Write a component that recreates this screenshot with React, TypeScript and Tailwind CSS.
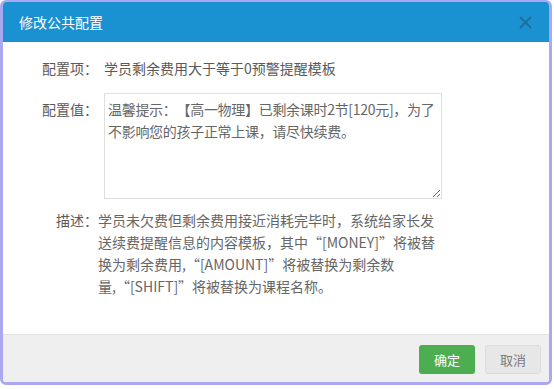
import React from 'react';

const FONT = "font-['Microsoft_YaHei','Noto_Sans_CJK_SC',sans-serif]";

const TEMPLATE_TEXT =
  '温馨提示：【高一物理】已剩余课时2节[120元]，为了不影响您的孩子正常上课，请尽快续费。';

// description lines are broken where the reference breaks them
const DESC_LINES = [
  '学员未欠费但剩余费用接近消耗完毕时，系统给家长发',
  '送续费提醒信息的内容模板，其中“[MONEY]”将被替',
  '换为剩余费用,“[AMOUNT]”将被替换为剩余数',
  '量,“[SHIFT]”将被替换为课程名称。',
];

export default function App() {
  return (
    <div className={`w-[554px] h-[389px] bg-white [text-spacing-trim:space-all] ${FONT}`}>
      <div className="w-[552px] border-x-[3px] border-t-2 border-b-[3px] border-[#aba8f2] rounded-[6px] overflow-hidden flex flex-col">
        {/* Header */}
        <div className="h-[40px] bg-[#1a92d1] flex items-center justify-between pl-[16px] pr-[17px]">
          <h1 className="text-[14px] text-white">修改公共配置</h1>
          <button className="w-[14px] h-[14px] flex items-center justify-center">
            <svg width="13" height="13" viewBox="0 0 13 13">
              <path d="M1.5 1.5 L11.5 11.5 M11.5 1.5 L1.5 11.5" stroke="#1d6f9f" strokeWidth="1.8" strokeLinecap="round" />
            </svg>
          </button>
        </div>

        {/* Body */}
        <div className="h-[292px] bg-white pt-[15px] text-[14px] leading-[22px]">
          <div className="flex">
            <span className="w-[95px] text-right text-[#5a5a5a]">配置项：</span>
            <span className="ml-[6px] text-[#5a5a5a]">学员剩余费用大于等于0预警提醒模板</span>
          </div>

          <div className="flex mt-[14px]">
            <span className="w-[95px] text-right text-[#5a5a5a] pt-[5px]">配置值：</span>
            <textarea
              className="ml-[6px] w-[338px] h-[106px] border border-[#dedede] pl-[3px] pr-0 py-[4px] text-[14px] leading-[22px] tracking-[-0.3px] text-[#666] outline-none [text-spacing-trim:space-all]"
              defaultValue={TEMPLATE_TEXT}
            />
          </div>

          <div className="flex mt-[10px]">
            <span className="w-[95px] text-right text-[#5a5a5a]">描述：</span>
            <div className="text-[#666]">
              {DESC_LINES.map((line) => (
                <div key={line} className="whitespace-nowrap">{line}</div>
              ))}
            </div>
          </div>
        </div>

        {/* Footer */}
        <div className="h-[48px] bg-[#efefef] border-t border-[#e3e3e3] flex justify-end items-start gap-[10px] pt-[10px] pr-[8px]">
          <button className="w-[56px] h-[29px] rounded-[3px] bg-[#4cae50] text-white text-[13px]">确定</button>
          <button className="w-[56px] h-[29px] rounded-[3px] bg-[#e7e7e7] border border-[#dcdcdc] text-[#7a7a7a] text-[13px]">取消</button>
        </div>
      </div>
    </div>
  );
}
